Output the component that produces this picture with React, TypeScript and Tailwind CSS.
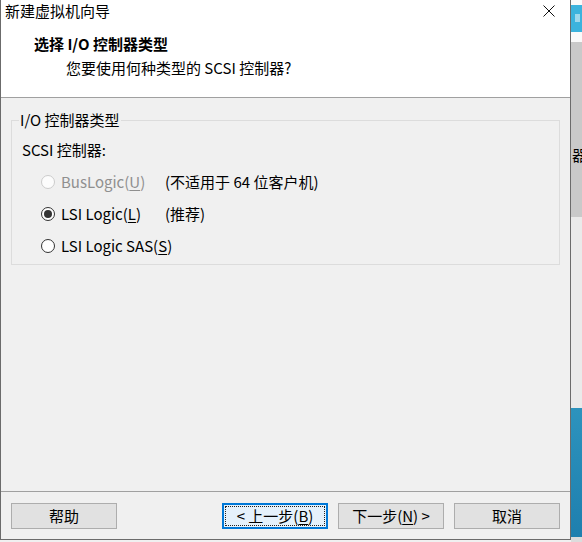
import React from "react";

function Radio({ state }: { state: "disabled" | "checked" | "unchecked" }) {
  if (state === "disabled") {
    return <span className="w-[14px] h-[14px] rounded-full border border-[#cccccc] bg-[#fcfcfc] shrink-0" />;
  }
  return (
    <span className="w-[14px] h-[14px] rounded-full border border-[#333333] bg-white shrink-0 flex items-center justify-center">
      {state === "checked" && <span className="w-[8px] h-[8px] rounded-full bg-[#333333]" />}
    </span>
  );
}

function Btn({ children, focused }: { children: React.ReactNode; focused?: boolean }) {
  return (
    <div
      className={
        focused
          ? "w-[106px] h-[26px] flex items-center justify-center bg-[#e5f1fb] border-2 border-[#0078d7] outline-1 outline-dotted outline-[#222] outline-offset-[-4px]"
          : "w-[106px] h-[26px] flex items-center justify-center bg-[#e1e1e1] border border-[#adadad]"
      }
    >
      {children}
    </div>
  );
}

export default function App() {
  return (
    <div className="flex w-[582px] h-[542px] bg-[#f0f0f0] font-['Noto_Sans_CJK_SC',sans-serif] text-[15px] leading-[20px] text-black overflow-hidden">
      <div className="flex flex-col w-[571px] h-[540px] border-x border-b border-[#6b6b6b] bg-[#f0f0f0] shrink-0">
        <div className="h-[98px] bg-white border-b border-[#a0a0a0] flex flex-col shrink-0">
          <div className="h-[21px] flex items-center justify-between pl-[4px] pr-[15px]">
            <span>新建虚拟机向导</span>
            <svg width="12" height="12" viewBox="0 0 12 12">
              <path d="M0.5 0.5 L11.5 11.5 M11.5 0.5 L0.5 11.5" stroke="#111" strokeWidth="1" fill="none" />
            </svg>
          </div>
          <div className="mt-[13px] pl-[33px] font-bold">选择 I/O 控制器类型</div>
          <div className="mt-[4px] pl-[65px]">您要使用何种类型的 SCSI 控制器?</div>
        </div>

        <div className="flex-1 flex flex-col">
          <div className="mt-[22px] ml-[10px] w-[549px] h-[145px] border border-[#dcdcdc] flex flex-col">
            <div className="-mt-[11px] ml-[7px] px-[1px] w-fit bg-[#f0f0f0]">I/O 控制器类型</div>
            <div className="mt-[10px] pl-[10px]">SCSI 控制器:</div>
            <div className="mt-[12px] flex flex-col gap-[12px]">
              <div className="flex items-center h-[20px] pl-[29px]">
                <Radio state="disabled" />
                <span className="ml-[6px] w-[104px] text-[#8f8f8f]">
                  BusLogic(<span className="underline underline-offset-2">U</span>)
                </span>
                <span>(不适用于 64 位客户机)</span>
              </div>
              <div className="flex items-center h-[20px] pl-[29px]">
                <Radio state="checked" />
                <span className="ml-[6px] w-[104px]">
                  LSI Logic(<span className="underline underline-offset-2">L</span>)
                </span>
                <span>(推荐)</span>
              </div>
              <div className="flex items-center h-[20px] pl-[29px]">
                <Radio state="unchecked" />
                <span className="ml-[6px]">
                  LSI Logic SAS(<span className="underline underline-offset-2">S</span>)
                </span>
              </div>
            </div>
          </div>
        </div>

        <div className="h-[48px] shrink-0 border-t border-[#a0a0a0] pt-[11px] px-[10px] flex items-start justify-between">
          <Btn>帮助</Btn>
          <div className="flex gap-[10px]">
            <Btn focused>
              &lt; 上一步(<span className="underline underline-offset-2">B</span>)
            </Btn>
            <Btn>
              下一步(<span className="underline underline-offset-2">N</span>) &gt;
            </Btn>
            <Btn>取消</Btn>
          </div>
        </div>
      </div>

      <div className="flex-1 flex flex-col overflow-hidden">
        <div className="h-[5px] bg-[#fafafa]" />
        <div className="h-[27px] bg-[#3cb3dd] flex">
          <div className="ml-[4px] mt-[9px] w-[5px] h-[8px] bg-[#9fd8ec]" />
        </div>
        <div className="h-[10px] bg-[#fafafa]" />
        <div className="h-[175px] bg-[#c9c9c9] overflow-hidden">
          <div className="mt-[103px] ml-[1px] whitespace-nowrap">器</div>
        </div>
        <div className="h-[191px] bg-[#eaeaea]" />
        <div className="h-[129px] bg-gradient-to-b from-[#2d93bd] to-[#1e7fae]" />
        <div className="flex-1 bg-[#dcdcdc]" />
      </div>
    </div>
  );
}
